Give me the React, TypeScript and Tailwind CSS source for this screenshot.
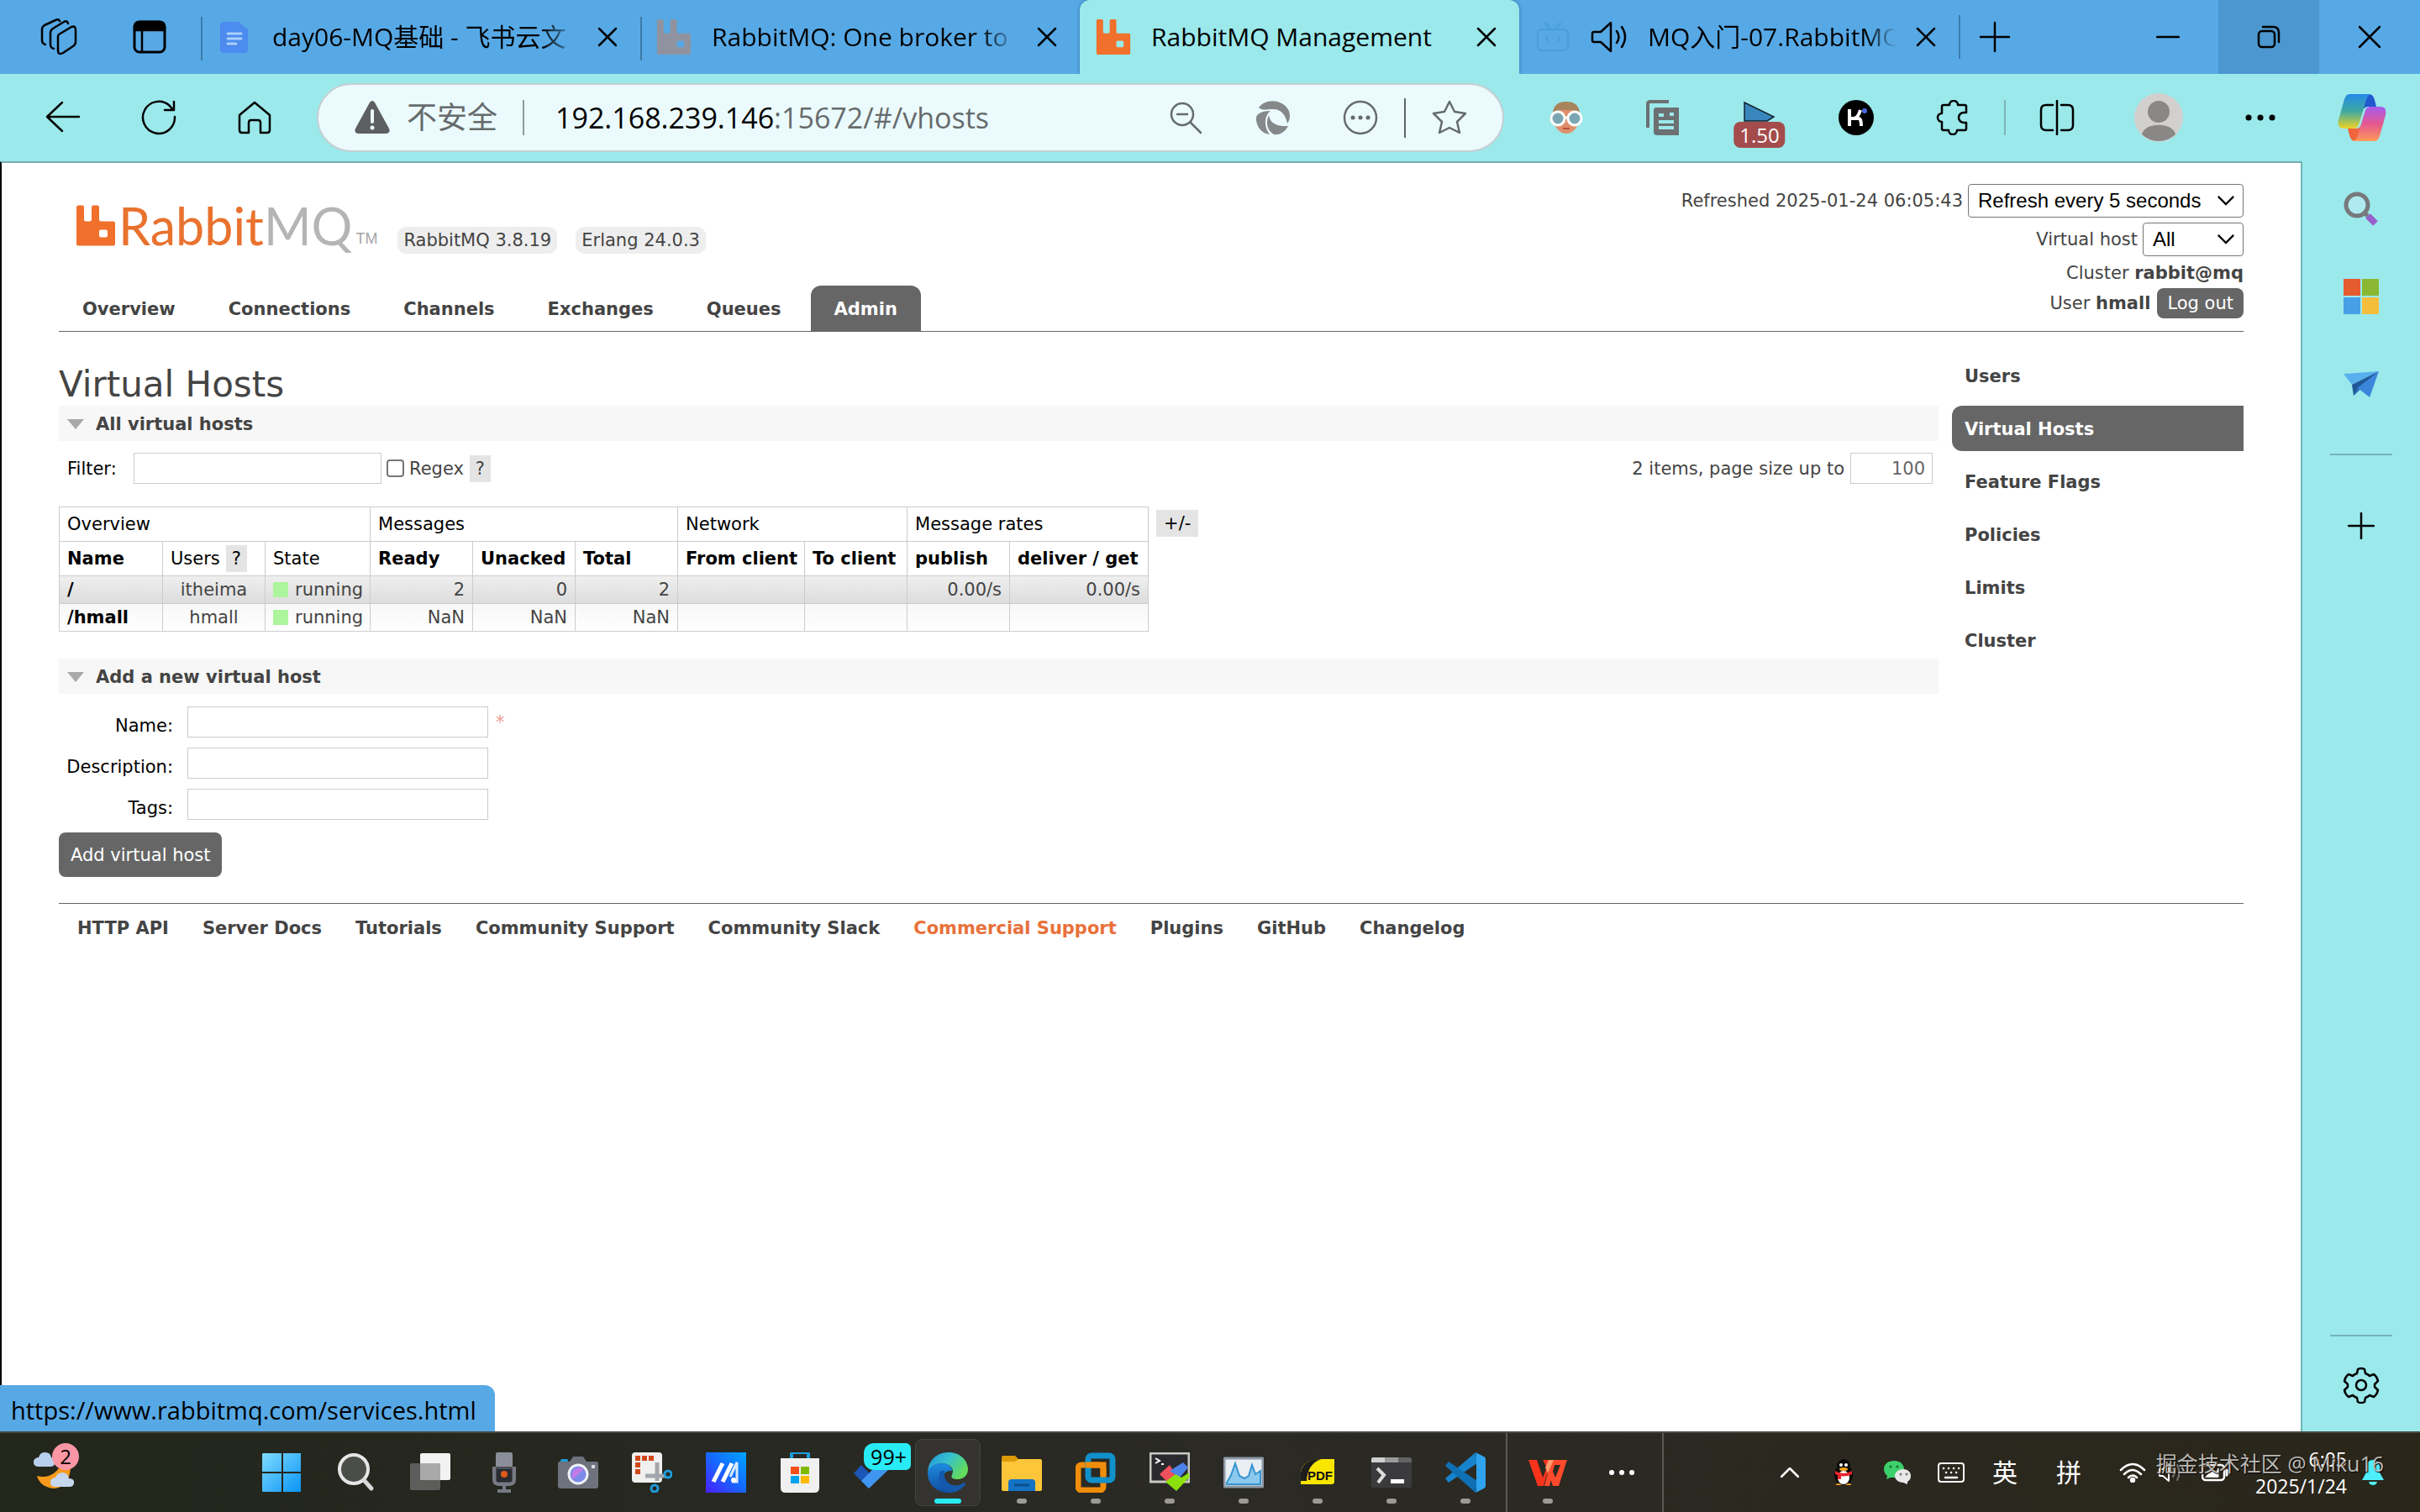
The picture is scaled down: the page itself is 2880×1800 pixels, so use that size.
import React from 'react';

const UI_FONT = "font-['Open_Sans','Noto_Sans_CJK_SC',sans-serif]";
const PAGE_FONT = "font-['DejaVu_Sans','Noto_Sans_CJK_SC',sans-serif]";

interface IconProps {
  className?: string;
  box?: string;
  children?: React.ReactNode;
}

// Outline icon, strokes follow the text colour
const Line: React.FC<IconProps> = ({ className = 'w-[42px] h-[42px]', box = '0 0 42 42', children }) => (
  <svg viewBox={box} className={`shrink-0 ${className}`} fill="none" stroke="currentColor" strokeWidth="2.5" strokeLinecap="round" strokeLinejoin="round" aria-hidden="true">
    {children}
  </svg>
);

const Solid: React.FC<IconProps> = ({ className = 'w-[48px] h-[48px]', box = '0 0 48 48', children }) => (
  <svg viewBox={box} className={`shrink-0 ${className}`} aria-hidden="true">
    {children}
  </svg>
);

const CloseIcon = () => (
  <Line className="w-6 h-6" box="0 0 24 24">
    <path d="M2 2L22 22M22 2L2 22" />
  </Line>
);

const RabbitIcon: React.FC<{ className: string }> = ({ className }) => (
  <svg viewBox="0 0 46 48" className={`shrink-0 ${className}`} fill="currentColor" aria-hidden="true">
    <path
      fillRule="evenodd"
      d="M2 0H7Q9 0 9 2V17Q9 19 11 19H16Q18 19 18 17V2Q18 0 20 0H25Q27 0 27 2V17Q27 19 29 19H44Q46 19 46 21V46Q46 48 44 48H2Q0 48 0 46V2Q0 0 2 0ZM29 29Q27 29 27 31V36Q27 38 29 38H35Q37 38 37 36V31Q37 29 35 29Z"
    />
  </svg>
);

/* ---------- Browser tab strip ---------- */

interface TabProps {
  title: string;
  icon: React.ReactNode;
  extra?: React.ReactNode;
  active?: boolean;
  divider?: boolean;
}

const Tab: React.FC<TabProps> = ({ title, icon, extra, active, divider }) => (
  <div
    className={`relative w-[523px] h-[88px] shrink-0 flex items-center gap-6 pl-[19px] pr-[27px] ${
      active ? 'bg-[#9be9eb] rounded-t-xl shadow-[0_0_4px_#2f6f9f]' : ''
    }`}
  >
    {divider && <span className="absolute left-0 top-5 w-[2px] h-[52px] bg-[#3c7ba8]" />}
    {icon}
    {extra}
    <span
      className={`flex-1 min-w-0 overflow-hidden whitespace-nowrap text-[30px] leading-[40px] ${
        active ? '' : '[mask-image:linear-gradient(to_right,black_88%,transparent_100%)]'
      }`}
    >
      {title}
    </span>
    <button aria-label={`Close ${title}`}>
      <CloseIcon />
    </button>
  </div>
);

const TabStrip = () => (
  <header className="flex items-center h-[88px] bg-[#57a9e6] text-black overflow-hidden">
    <div className="w-[239px] pl-12 flex items-center gap-16 shrink-0">
      <button aria-label="Workspaces">
        <Line className="w-[44px] h-[44px]" box="0 0 44 44">
          <path d="M22 19L37 10Q42 8 42 14V28Q42 31 39 33L27 41Q21 44 21 38V22Q21 20 22 19Z" />
          <path d="M16 36Q12 35 12 31V17Q12 14 15 12L28 4Q32 2 33 6" />
          <path d="M6 31Q2 30 2 26V13Q2 10 5 8L18 2Q22 0 23 3" />
        </Line>
      </button>
      <button aria-label="Tab actions">
        <Line className="w-[44px] h-[44px]" box="0 0 44 44">
          <rect x="4" y="4" width="36" height="36" rx="6" strokeWidth="3" />
          <path d="M4 14V10Q4 4 10 4H34Q40 4 40 10V14Z" fill="currentColor" />
          <path d="M13 14V40" />
        </Line>
      </button>
    </div>
    <Tab
      divider
      title="day06-MQ基础 - 飞书云文"
      icon={
        <Solid className="w-[42px] h-[42px]" box="0 0 42 42">
          <path d="M8 3H26L37 12V36Q37 40 33 40H8Q4 40 4 36V7Q4 3 8 3Z" fill="#4c8bf0" />
          <path d="M13 17H29M13 23H29M13 29H23" stroke="#a9d0fb" strokeWidth="3" strokeLinecap="round" />
        </Solid>
      }
    />
    <Tab divider title="RabbitMQ: One broker to q" icon={<RabbitIcon className="w-[42px] h-[42px] text-[#90939f]" />} />
    <Tab active title="RabbitMQ Management" icon={<RabbitIcon className="w-[42px] h-[42px] text-[#f0702c]" />} />
    <Tab
      title="MQ入门-07.RabbitMQ"
      icon={
        <Line className="w-[42px] h-[42px] text-[#4ba0d8]">
          <rect x="3" y="12" width="36" height="25" rx="5" />
          <path d="M12 4L17 11M30 4L25 11M14 21V26M28 21V26" />
        </Line>
      }
      extra={
        <Line className="w-[44px] h-[44px]" box="0 0 44 44">
          <path d="M4 16H12L24 5V39L12 28H4Q2 28 2 26V18Q2 16 4 16Z" />
          <path d="M31 15Q36 22 31 29M37 10Q45 22 37 34" />
        </Line>
      }
    />
    <span className="w-[2px] h-[52px] bg-[#3c7ba8]" />
    <button aria-label="New tab" className="ml-[22px]">
      <Line className="w-[38px] h-[38px]" box="0 0 38 38">
        <path d="M19 2V36M2 19H36" />
      </Line>
    </button>
    <div className="ml-auto flex shrink-0">
      <button aria-label="Minimize" className="w-[120px] h-[88px] flex items-center justify-center">
        <Line className="w-7 h-7" box="0 0 28 28">
          <path d="M1 14H27" />
        </Line>
      </button>
      <button aria-label="Restore" className="w-[120px] h-[88px] flex items-center justify-center bg-[#4c97cf]">
        <Line className="w-7 h-7" box="0 0 28 28">
          <rect x="2" y="7" width="19" height="19" rx="4" />
          <path d="M7 2H19Q26 2 26 9V20" />
        </Line>
      </button>
      <button aria-label="Close window" className="w-[120px] h-[88px] flex items-center justify-center">
        <Line className="w-7 h-7" box="0 0 28 28">
          <path d="M2 2L26 26M26 2L2 26" />
        </Line>
      </button>
    </div>
  </header>
);

/* ---------- Browser toolbar ---------- */

const AddressBar = () => (
  <div className="flex-1 min-w-0 h-[82px] mx-[53px] pl-[43px] pr-[42px] flex items-center rounded-full bg-[#ebfbfd] border-2 border-[#c5cfd3] text-[#666b6c]">
    <Solid className="w-[42px] h-[42px]" box="0 0 42 42">
      <path d="M18 3Q21 -1 24 3L41 34Q43 39 38 40H4Q-1 39 1 34Z" fill="#5d5f60" />
      <path d="M21 13V26" stroke="#ebfbfd" strokeWidth="4" strokeLinecap="round" />
      <circle cx="21" cy="33" r="2.5" fill="#ebfbfd" />
    </Solid>
    <span className="ml-5 text-[36px] leading-[48px] whitespace-nowrap">不安全</span>
    <span className="ml-[30px] mr-[37px] w-[2px] h-[42px] bg-[#8f9a9c]" />
    <span className="flex-1 min-w-0 text-[34px] leading-[48px] whitespace-nowrap">
      <span className="text-black">192.168.239.146</span>:15672/#/vhosts
    </span>
    <div className="flex items-center gap-[62px]">
      <button aria-label="Zoom out">
        <Line>
          <circle cx="17" cy="17" r="13" />
          <path d="M27 27L39 39M11 17H23" />
        </Line>
      </button>
      <button aria-label="Extension">
        <Solid className="w-[42px] h-[42px]" box="0 0 42 42">
          <path d="M4 9C12 -2 32 -2 40 13C42 20 41 24 38 28C36 18 30 10 20 11C13 11 8 13 4 9Z" fill="#85898a" />
          <path d="M1 24C0 17 6 13 18 13C10 19 10 32 17 41C8 40 2 33 1 24Z" fill="#85898a" />
          <path d="M16 18C17 28 27 32 39 31C35 39 28 42 22 41C14 36 12 28 16 18Z" fill="#85898a" />
        </Solid>
      </button>
      <button aria-label="More site actions">
        <Line>
          <circle cx="21" cy="21" r="19" />
          <path d="M12 21H12.1M21 21H21.1M30 21H30.1" strokeWidth="5" />
        </Line>
      </button>
    </div>
    <span className="mx-[31px] w-[2px] h-[47px] bg-[#5d6667]" />
    <button aria-label="Add to favorites">
      <Line>
        <path d="M21 2L27 14L40 16L30 26L33 39L21 33L9 39L12 26L2 16L15 14Z" />
      </Line>
    </button>
  </div>
);

const Toolbar = () => (
  <div className="flex items-center h-[104px] pl-[54px] pr-10 bg-[#9be9eb] text-black">
    <div className="flex items-center gap-[72px]">
      <button aria-label="Back">
        <Line>
          <path d="M20 3L2 20L20 37M2 20H40" />
        </Line>
      </button>
      <button aria-label="Refresh">
        <Line>
          <path d="M40 20A19 19 0 1 1 34 7L38 12M39 2V12H28" />
        </Line>
      </button>
      <button aria-label="Home">
        <Line>
          <path d="M3 18L21 3L39 18V36Q39 39 36 39H28V27Q28 24 25 24H17Q14 24 14 27V39H6Q3 39 3 36Z" />
        </Line>
      </button>
    </div>
    <AddressBar />
    <div className="flex items-center gap-[73px] shrink-0">
      <button aria-label="Glasses extension">
        <Solid className="w-[42px] h-[42px]" box="0 0 42 42">
          <ellipse cx="21" cy="22" rx="15" ry="18" fill="#e0906c" />
          <path d="M5 20C4 6 12 2 21 2S38 6 37 20L30 12H12Z" fill="#a8845c" />
          <circle cx="11" cy="22" r="8" fill="#7ba6b4" stroke="#fff" strokeWidth="3" />
          <circle cx="31" cy="22" r="8" fill="#7ba6b4" stroke="#fff" strokeWidth="3" />
          <path d="M18 21H24" stroke="#fff" strokeWidth="3" />
          <path d="M17 34H25" stroke="#b5533b" strokeWidth="2" />
        </Solid>
      </button>
      <button aria-label="Copy extension">
        <Solid className="w-[42px] h-[42px]" box="0 0 42 42">
          <path d="M28 2H6Q3 2 3 5V33" fill="none" stroke="#6c7072" strokeWidth="4" />
          <path d="M12 9H40V42H14Q10 42 10 38V11Z" fill="#6c7072" />
          <path d="M16 18H22M29 17H34M16 26H34M16 33H34" stroke="#9be9eb" strokeWidth="4" />
        </Solid>
      </button>
      <button aria-label="Speed extension" className="relative w-[42px] h-[42px]">
        <Solid className="w-[42px] h-[42px]" box="0 0 42 42">
          <path d="M3 3L38 20L30 25H3Z" fill="#3986bd" stroke="#10222e" strokeWidth="1.5" />
        </Solid>
        <span className="absolute left-1/2 top-[26px] -translate-x-1/2 px-[7px] rounded-lg bg-[#a44c4c] text-white text-[24px] leading-[31px]">1.50</span>
      </button>
      <button aria-label="K extension">
        <Solid className="w-[42px] h-[42px]" box="0 0 42 42">
          <circle cx="21" cy="21" r="21" fill="#000" />
          <path d="M13 11V31M13 22H24Q27 22 27 31M26 12Q23 22 18 22" fill="none" stroke="#fff" strokeWidth="4" />
          <circle cx="31" cy="13" r="3" fill="#4a6ae0" />
        </Solid>
      </button>
      <button aria-label="Extensions">
        <Line>
          <path d="M10 6H17A5 5 0 0 1 27 6H35Q37 6 37 8V15H34A6 6 0 0 0 34 27H37V34Q37 36 35 36H26A5 5 0 0 1 16 36H10Q8 36 8 34V26A5 5 0 0 1 8 16V8Q8 6 10 6Z" />
        </Line>
      </button>
    </div>
    <span className="mx-[40px] w-[2px] h-[42px] bg-[#7fb5b9]" />
    <div className="flex items-center gap-[71px] shrink-0">
      <button aria-label="Split screen">
        <Line>
          <path d="M21 1V41M16 6H8Q2 6 2 12V30Q2 36 8 36H16M26 6H34Q40 6 40 12V30Q40 36 34 36H26" />
        </Line>
      </button>
      <button aria-label="Profile">
        <Solid className="w-[58px] h-[58px]" box="0 0 58 58">
          <circle cx="29" cy="29" r="29" fill="#d2d0ce" />
          <circle cx="29" cy="22" r="13" fill="#8a8886" />
          <path d="M9 49C12 34 46 34 49 49A29 29 0 0 1 9 49Z" fill="#8a8886" />
        </Solid>
      </button>
      <button aria-label="Settings and more">
        <Line>
          <path d="M7 21H7.1M21 21H21.1M35 21H35.1" strokeWidth="7" />
        </Line>
      </button>
      <button aria-label="Copilot">
        <Solid className="w-[58px] h-[58px]" box="0 0 58 58">
          <defs>
            <linearGradient id="cpA" x1="0" y1="0" x2="0" y2="1">
              <stop offset="0" stopColor="#2589e8" />
              <stop offset="0.5" stopColor="#3fa9a0" />
              <stop offset="1" stopColor="#f0d326" />
            </linearGradient>
            <linearGradient id="cpB" x1="0" y1="0" x2="0" y2="1">
              <stop offset="0" stopColor="#a45cf0" />
              <stop offset="0.5" stopColor="#e4588f" />
              <stop offset="1" stopColor="#ff9a56" />
            </linearGradient>
          </defs>
          <path d="M30 1H37Q42 1 44 8L46 16H36Q31 16 29 22Z" fill="#2157cf" />
          <path d="M28 57H20Q16 57 14 50L12 42H22Q27 42 29 36Z" fill="#f1653d" />
          <path d="M14 1H40Q36 2 34 8L25 38Q23 42 19 42H7Q-1 42 1 32L8 7Q10 1 14 1Z" fill="url(#cpA)" />
          <path d="M44 57H18Q22 56 24 50L33 20Q35 16 39 16H51Q59 16 57 26L50 51Q48 57 44 57Z" fill="url(#cpB)" />
        </Solid>
      </button>
    </div>
  </div>
);

/* ---------- RabbitMQ management page ---------- */

const NAV = ['Overview', 'Connections', 'Channels', 'Exchanges', 'Queues', 'Admin'];

const ADMIN_LINKS = ['Users', 'Virtual Hosts', 'Feature Flags', 'Policies', 'Limits', 'Cluster'];

const FOOTER_LINKS = [
  'HTTP API',
  'Server Docs',
  'Tutorials',
  'Community Support',
  'Community Slack',
  'Commercial Support',
  'Plugins',
  'GitHub',
  'Changelog'
];

const VHOSTS = [
  { name: '/', users: 'itheima', ready: '2', unacked: '0', total: '2', publish: '0.00/s', deliver: '0.00/s' },
  { name: '/hmall', users: 'hmall', ready: 'NaN', unacked: 'NaN', total: 'NaN', publish: '', deliver: '' }
];

interface SelectProps {
  id: string;
  label: string;
  value: string;
  className: string;
}

const Select: React.FC<SelectProps> = ({ id, label, value, className }) => (
  <>
    <label htmlFor={id}>{label}</label>
    <span className="relative ml-[6px]">
      <select
        id={id}
        className={`block appearance-none h-10 pl-[11px] rounded border border-[#767676] bg-white text-black text-[24px] leading-[32px] font-['Liberation_Sans',sans-serif] ${className}`}
      >
        <option>{value}</option>
      </select>
      <svg viewBox="0 0 24 14" className="absolute right-[10px] top-[13px] w-[22px] h-[13px] pointer-events-none" fill="none" stroke="#000" strokeWidth="2.5" aria-hidden="true">
        <path d="M2 2L12 12L22 2" />
      </svg>
    </span>
  </>
);

const PageHeader = () => (
  <div className="flex justify-between border-b border-[#666]">
    <div className="flex flex-col justify-between">
      <div className="mt-[50px] ml-[21px] flex items-start">
        <div className="flex items-start h-[58px]">
          <RabbitIcon className="w-[46px] h-[49px] text-[#f0702c]" />
          <span className="ml-1 text-[61px] leading-[50px] whitespace-nowrap font-['Lato',sans-serif] text-[#e9722e]">
            Rabbit<span className="text-[#b5b5b5]">MQ</span>
          </span>
          <span className="ml-1 mt-[28px] text-[18px] leading-[24px] font-['Liberation_Sans',sans-serif] text-[#a5a5a5]">TM</span>
        </div>
        <div className="ml-[24px] mt-[26px] flex gap-[22px]">
          <span className="h-8 px-[7px] rounded-[10px] bg-[#eee] leading-8">RabbitMQ 3.8.19</span>
          <span className="h-8 px-[7px] rounded-[10px] bg-[#eee] leading-8">Erlang 24.0.3</span>
        </div>
      </div>
      <nav className="flex gap-[7px] font-bold">
        {NAV.map((item) => (
          <a
            key={item}
            href="#"
            className={`h-[54px] px-[28px] leading-[57px] rounded-t-xl ${item === 'Admin' ? 'bg-[#666] text-white' : ''}`}
          >
            {item}
          </a>
        ))}
      </nav>
    </div>
    <div className="flex flex-col items-end pt-[25px] pb-[15px] whitespace-nowrap">
      <div className="flex items-center">
        <Select id="refresh" label="Refreshed 2025-01-24 06:05:43" value="Refresh every 5 seconds" className="w-[328px]" />
      </div>
      <div className="mt-[6px] flex items-center">
        <Select id="vhost" label="Virtual host" value="All" className="w-[120px]" />
      </div>
      <div className="pt-[2px] leading-[36px]">
        Cluster <b>rabbit@mq</b>
      </div>
      <div className="flex items-center gap-2">
        <span>
          User <b>hmall</b>
        </span>
        <button className="h-9 px-3 rounded-lg bg-[#666] text-white">Log out</button>
      </div>
    </div>
  </div>
);

const SectionTitle: React.FC<{ children: React.ReactNode }> = ({ children }) => (
  <h2 className="h-[42px] pt-[2px] pl-[10px] flex items-center gap-[14px] bg-[#f7f7f7] font-bold">
    <svg viewBox="0 0 20 12" className="w-5 h-3" fill="#a9a9a9" aria-hidden="true">
      <path d="M0 0H20L10 12Z" />
    </svg>
    {children}
  </h2>
);

const Help = () => <button className="w-[25px] h-8 bg-[#e4e4e4] leading-8">?</button>;

const CELL = 'border border-[#ccc] px-[9px] text-left';

const VhostTable = () => (
  <table className="w-[1296px] table-fixed border-collapse text-left">
    <colgroup>
      <col className="w-[123px]" />
      <col className="w-[122px]" />
      <col className="w-[125px]" />
      <col className="w-[122px]" />
      <col className="w-[122px]" />
      <col className="w-[122px]" />
      <col className="w-[151px]" />
      <col className="w-[122px]" />
      <col className="w-[122px]" />
      <col className="w-[165px]" />
    </colgroup>
    <thead className="text-black whitespace-nowrap">
      <tr className="h-[41px]">
        <th colSpan={3} className={`${CELL} font-normal`}>Overview</th>
        <th colSpan={3} className={`${CELL} font-normal`}>Messages</th>
        <th colSpan={2} className={`${CELL} font-normal`}>Network</th>
        <th colSpan={2} className={`${CELL} font-normal`}>Message rates</th>
      </tr>
      <tr className="h-[41px]">
        <th className={CELL}>Name</th>
        <th className={`${CELL} font-normal`}>
          <span className="flex items-center gap-[7px]">
            Users <Help />
          </span>
        </th>
        <th className={`${CELL} font-normal`}>State</th>
        <th className={CELL}>Ready</th>
        <th className={CELL}>Unacked</th>
        <th className={CELL}>Total</th>
        <th className={CELL}>From client</th>
        <th className={CELL}>To client</th>
        <th className={CELL}>publish</th>
        <th className={CELL}>deliver / get</th>
      </tr>
    </thead>
    <tbody>
      {VHOSTS.map((v, i) => (
        <tr
          key={v.name}
          className={`h-[33px] leading-[28px] bg-linear-to-b ${i === 0 ? 'from-[#efefef] to-[#dcdcdc]' : 'from-[#f7f7f7] to-white'}`}
        >
          <td className={`${CELL} font-bold text-black`}>{v.name}</td>
          <td className="border border-[#ccc] px-[9px] text-center">{v.users}</td>
          <td className={CELL}>
            <span className="flex items-center gap-2">
              <span className="w-[18px] h-[18px] shrink-0 bg-[#adf59c]" />
              running
            </span>
          </td>
          <td className="border border-[#ccc] px-[9px] text-right">{v.ready}</td>
          <td className="border border-[#ccc] px-[9px] text-right">{v.unacked}</td>
          <td className="border border-[#ccc] px-[9px] text-right">{v.total}</td>
          <td className="border border-[#ccc]" />
          <td className="border border-[#ccc]" />
          <td className="border border-[#ccc] px-[9px] text-right">{v.publish}</td>
          <td className="border border-[#ccc] px-[9px] text-right">{v.deliver}</td>
        </tr>
      ))}
    </tbody>
  </table>
);

const FIELD = 'h-[37px] border border-[#ccc] bg-white px-2';

const AddVhostForm = () => (
  <form onSubmit={(e) => e.preventDefault()}>
    <div className="mt-[15px] flex flex-col gap-3">
      {['Name', 'Description', 'Tags'].map((field) => (
        <div key={field} className="flex items-center h-[37px]">
          <label htmlFor={`field-${field}`} className="w-[136px] mt-2 text-right text-black">
            {field}:
          </label>
          <input id={`field-${field}`} type="text" className={`${FIELD} ml-[17px] w-[358px]`} />
          {field === 'Name' && <span className="ml-[9px] text-[#ec9a93]">*</span>}
        </div>
      ))}
    </div>
    <button className="mt-[15px] h-[53px] px-[14px] rounded-lg bg-[#666] text-white">Add virtual host</button>
  </form>
);

const ManagementPage = () => (
  <main className={`flex-1 min-w-0 px-[68px] bg-white border-t-2 border-t-[#7aabb0] border-l-2 border-l-black text-[#444] text-[21px] leading-[28px] ${PAGE_FONT}`}>
    <PageHeader />
    <div className="flex gap-4">
      <div className="flex-1 min-w-0">
        <h1 className="pt-[38px] text-[42px] leading-[50px]">Virtual Hosts</h1>
        <SectionTitle>All virtual hosts</SectionTitle>
        <div className="mt-[14px] mb-[27px] flex items-center pl-[10px] pr-[7px]">
          <label htmlFor="filter" className="w-[79px] text-black">Filter:</label>
          <input id="filter" type="text" className={`${FIELD} w-[295px]`} />
          <input id="regex" type="checkbox" className="appearance-none ml-[6px] w-[21px] h-[21px] rounded border-2 border-[#767676] bg-white" />
          <label htmlFor="regex" className="ml-[6px] mr-[7px]">Regex</label>
          <Help />
          <label htmlFor="pagesize" className="ml-auto mr-[7px]">2 items, page size up to</label>
          <input id="pagesize" type="text" defaultValue="100" className={`${FIELD} w-[98px] text-right text-[#666]`} />
        </div>
        <div className="flex items-start gap-[9px]">
          <VhostTable />
          <button className="mt-1 h-8 px-[9px] bg-[#e4e4e4] text-black leading-8">+/-</button>
        </div>
        <div className="h-8" />
        <SectionTitle>Add a new virtual host</SectionTitle>
        <AddVhostForm />
      </div>
      <nav className="w-[347px] shrink-0 pt-[25px] flex flex-col gap-[9px] font-bold">
        {ADMIN_LINKS.map((item) => (
          <a
            key={item}
            href="#"
            className={`h-[54px] pl-[15px] leading-[56px] rounded-l-xl ${item === 'Virtual Hosts' ? 'bg-[#666] text-white' : ''}`}
          >
            {item}
          </a>
        ))}
      </nav>
    </div>
    <footer className="mt-[31px] pt-[15px] pl-[22px] border-t border-[#666] flex gap-10 font-bold">
      {FOOTER_LINKS.map((item) => (
        <a key={item} href="#" className={item === 'Commercial Support' ? 'text-[#e8713a]' : ''}>
          {item}
        </a>
      ))}
    </footer>
  </main>
);

/* ---------- Edge sidebar ---------- */

const EdgeSidebar = () => (
  <aside className="w-[142px] shrink-0 flex flex-col items-center bg-[#9be9eb] border-l-2 border-[#6fb6bb] text-black pt-[36px] pb-[33px]">
    <button aria-label="Search">
      <Solid className="w-[42px] h-[42px]" box="0 0 42 42">
        <circle cx="16" cy="16" r="13" fill="#aeeaf0" stroke="#77797c" strokeWidth="5" />
        <path d="M25 26L29 29" stroke="#77797c" strokeWidth="5" />
        <path d="M29 29L38 38" stroke="#9660cc" strokeWidth="8" />
      </Solid>
    </button>
    <button aria-label="Microsoft 365" className="mt-[62px]">
      <Solid className="w-[42px] h-[42px]" box="0 0 42 42">
        <path d="M0 0H20V20H0Z" fill="#e55b30" />
        <path d="M22 0H42V20H22Z" fill="#8ab833" />
        <path d="M0 22H20V42H0Z" fill="#479fe6" />
        <path d="M22 22H42V42H22Z" fill="#f4bd3c" />
      </Solid>
    </button>
    <button aria-label="Drop" className="mt-[62px]">
      <Solid className="w-[42px] h-[42px]" box="0 0 42 42">
        <path d="M0 9L42 6L10 22Z" fill="#58b0ee" />
        <path d="M42 6L10 22L12 35Z" fill="#1f5896" />
        <path d="M42 6L17 25L12 35Z" fill="#2d73c0" />
        <path d="M42 6L17 26L31 37Z" fill="#3b86da" />
      </Solid>
    </button>
    <span className="mt-[62px] w-[74px] h-[2px] bg-[#74b4b9]" />
    <button aria-label="Customize sidebar" className="mt-[68px]">
      <Line className="w-8 h-8" box="0 0 32 32">
        <path d="M16 1V31M1 16H31" />
      </Line>
    </button>
    <span className="mt-auto w-[74px] h-[2px] bg-[#74b4b9]" />
    <button aria-label="Settings" className="mt-[36px]">
      <Line className="w-[44px] h-[44px]" box="0 0 44 44">
        <path d="M17 8L18 3Q22 1 26 3L27 8Q30 9 32 11L37 9Q41 12 42 17L38 21V24L42 28Q41 33 37 36L32 34Q30 36 27 37L26 42Q22 44 18 42L17 37Q14 36 12 34L7 36Q3 33 2 28L6 24V21L2 17Q3 12 7 9L12 11Q14 9 17 8Z" />
        <circle cx="22" cy="22" r="6" />
      </Line>
    </button>
  </aside>
);

/* ---------- Windows taskbar ---------- */

interface TaskProps {
  name: string;
  running?: boolean;
  children: React.ReactNode;
}

const Task: React.FC<TaskProps> = ({ name, running, children }) => (
  <button aria-label={name} className="relative w-[88px] h-[94px] shrink-0 flex items-center justify-center">
    {children}
    {running && <span className="absolute left-1/2 -translate-x-1/2 top-[78px] w-3 h-[6px] rounded-full bg-[#9b9a95]" />}
  </button>
);

const TaskbarApps = () => (
  <>
    <Task name="Start">
      <Solid>
        <defs>
          <linearGradient id="win" x1="0" y1="0" x2="1" y2="1">
            <stop offset="0" stopColor="#7fdcff" />
            <stop offset="1" stopColor="#0a94f5" />
          </linearGradient>
        </defs>
        <path d="M1 1H23V23H0V2ZM25 1H46V23H25ZM0 25H23V47H1L0 46ZM25 25H46V47H25Z" fill="url(#win)" />
      </Solid>
    </Task>
    <Task name="Search">
      <Solid>
        <circle cx="21" cy="20" r="17" fill="#4b4d49" stroke="#e6e6e6" strokeWidth="4" />
        <path d="M33 33L42 43" stroke="#d9d9d9" strokeWidth="5" strokeLinecap="round" />
      </Solid>
    </Task>
    <Task name="Task view">
      <Solid>
        <rect x="12" y="1" width="36" height="32" rx="2" fill="#f2f2f2" />
        <rect x="0" y="13" width="36" height="32" rx="2" fill="#5d5d5b" />
        <rect x="12" y="13" width="24" height="20" fill="#a9a9a9" />
      </Solid>
    </Task>
    <Task name="Sound recorder">
      <Solid>
        <path d="M14 2Q14 0 16 0H32Q34 0 34 2V20H14Z" fill="#8b8e98" />
        <path d="M12 17V32Q12 38 18 38H30Q36 38 36 32V17" fill="#4a4d55" stroke="#777a84" strokeWidth="4" />
        <rect x="15" y="20" width="18" height="15" fill="#2b2c30" />
        <circle cx="24" cy="26" r="4" fill="#e0591b" />
        <path d="M24 39V45M16 46H32" stroke="#777a84" strokeWidth="4" />
      </Solid>
    </Task>
    <Task name="Camera">
      <Solid>
        <rect x="3" y="8" width="9" height="5" rx="2" fill="#1d9cdd" />
        <path d="M0 13Q0 11 2 11H14L18 5H30L34 11H46Q48 11 48 13V40Q48 43 45 43H3Q0 43 0 40Z" fill="#6d727c" />
        <circle cx="24" cy="26" r="11" fill="#7b8be8" stroke="#f0f2f8" strokeWidth="3" />
        <path d="M18 32A9 9 0 0 1 31 20Z" fill="#c07be8" />
        <rect x="40" y="15" width="4" height="4" fill="#d8dadf" />
      </Solid>
    </Task>
    <Task name="Snipping tool">
      <Solid>
        <rect x="0" y="0" width="36" height="36" rx="4" fill="#f0f0f0" />
        <path d="M7 26V7H28" fill="none" stroke="#d1481a" strokeWidth="6" strokeDasharray="6 2" />
        <path d="M30 12V34M16 28H40" stroke="#a3a6aa" strokeWidth="5" />
        <circle cx="43" cy="26" r="4" fill="none" stroke="#1d9cdd" strokeWidth="3" />
        <circle cx="27" cy="43" r="4" fill="none" stroke="#1d9cdd" strokeWidth="3" />
      </Solid>
    </Task>
    <Task name="Assistant">
      <Solid>
        <defs>
          <linearGradient id="ast" x1="0" y1="1" x2="1" y2="0">
            <stop offset="0" stopColor="#4a1fff" />
            <stop offset="0.5" stopColor="#1668ff" />
            <stop offset="1" stopColor="#00a5ff" />
          </linearGradient>
        </defs>
        <rect width="48" height="48" fill="url(#ast)" />
        <path d="M9 35L20 13M20 35L31 13" stroke="#fff" strokeWidth="5" />
        <path d="M29 29L37 12V35H31" fill="none" stroke="#d7e8ff" strokeWidth="3" />
        <circle cx="33" cy="33" r="3" fill="#fff" />
      </Solid>
    </Task>
    <Task name="Store">
      <Solid>
        <path d="M14 9V2Q14 0 16 0H32Q34 0 34 2V9" fill="none" stroke="#1d9cdd" strokeWidth="4" />
        <path d="M1 7H47V42Q47 48 41 48H7Q1 48 1 42Z" fill="#f0f0f0" />
        <path d="M13 17H23V26H13Z" fill="#f1511b" />
        <path d="M25 17H35V26H25Z" fill="#7fba00" />
        <path d="M13 28H23V37H13Z" fill="#00a4ef" />
        <path d="M25 28H35V37H25Z" fill="#fbb900" />
      </Solid>
    </Task>
    <Task name="To Do">
      <Solid>
        <path d="M0 25L9 15L24 30L18 43Z" fill="#1c56b5" />
        <path d="M18 43L9 34L33 10L43 19Z" fill="#3f95ef" />
      </Solid>
      <span className="absolute right-0 top-[12px] h-8 pl-2 pr-[5px] rounded-l-xl rounded-r-md bg-[#28ebf5] text-black text-[25px] leading-8">99+</span>
    </Task>
    <Task name="Edge">
      <span className="absolute left-[5px] top-[7px] w-[78px] h-20 rounded-lg bg-[#34332f] border border-[#44433f]" />
      <svg viewBox="0 0 48 48" className="relative w-12 h-12" aria-hidden="true">
        <defs>
          <linearGradient id="edgeA" x1="0" y1="0" x2="1" y2="0.5">
            <stop offset="0" stopColor="#2390dc" />
            <stop offset="0.5" stopColor="#35c0d0" />
            <stop offset="1" stopColor="#62dc5c" />
          </linearGradient>
          <linearGradient id="edgeB" x1="0" y1="0" x2="0" y2="1">
            <stop offset="0" stopColor="#1d8de0" />
            <stop offset="1" stopColor="#114d9e" />
          </linearGradient>
        </defs>
        <path d="M0 24C1 8 12 0 25 0C39 0 48 10 48 20C48 28 42 32 36 32C30 32 27 30 29 27C33 18 24 13 17 13C8 13 2 18 0 24Z" fill="url(#edgeA)" />
        <path d="M0 24C2 16 10 13 17 13C24 13 29 17 29 22C20 21 16 28 20 36C24 43 34 43 42 37C45 35 46 37 44 39C38 46 31 48 25 48C10 48 0 38 0 24Z" fill="url(#edgeB)" />
        <path d="M16 22C10 29 14 44 26 48C34 48 40 44 44 39C45 37 44 36 42 37C32 43 18 38 20 22Z" fill="#1459ac" />
      </svg>
      <span className="absolute left-1/2 -translate-x-1/2 top-[78px] w-8 h-[6px] rounded-full bg-[#28ebf5]" />
    </Task>
    <Task name="File explorer" running>
      <Solid>
        <path d="M0 6Q0 4 2 4H16L20 8V14H0Z" fill="#dd9a09" />
        <path d="M0 11H16L20 8H46Q48 8 48 10V44Q48 46 46 46H2Q0 46 0 44Z" fill="#fcc53a" />
        <path d="M8 46V36Q8 32 12 32H36Q40 32 40 36V46Z" fill="#1473c4" />
        <path d="M15 39H33" stroke="#0b4f8e" strokeWidth="3" />
      </Solid>
    </Task>
    <Task name="VMware" running>
      <Solid>
        <rect x="3" y="15" width="30" height="30" rx="4" fill="none" stroke="#f08d0a" strokeWidth="7" />
        <rect x="15" y="4" width="29" height="29" rx="4" fill="none" stroke="#1191cb" strokeWidth="7" />
        <path d="M12 15H33V28" fill="none" stroke="#f08d0a" strokeWidth="7" />
      </Solid>
    </Task>
    <Task name="MobaXterm" running>
      <Solid>
        <rect x="1" y="1" width="46" height="34" fill="#2a2a2e" stroke="#c9c9c2" strokeWidth="3" />
        <path d="M7 7L12 10L7 13M14 14H17" fill="none" stroke="#fff" strokeWidth="2" />
        <path d="M12 26L24 15L33 29L22 36Z" fill="#f0505b" />
        <path d="M24 22L40 12L46 18L36 30Z" fill="#4b83ea" />
        <path d="M19 35L31 26L38 30L47 24V30L32 46Z" fill="#8be00d" />
      </Solid>
    </Task>
    <Task name="Performance monitor" running>
      <Solid>
        <rect x="1" y="7" width="46" height="34" rx="1" fill="#e9eef5" stroke="#8c98a5" strokeWidth="3" />
        <path d="M4 36L9 27L14 13L19 28L25 31L30 28L34 15L38 26L44 22V38H4Z" fill="#8cc8ee" stroke="#3495cf" strokeWidth="2" />
      </Solid>
    </Task>
    <Task name="PDF editor" running>
      <Solid>
        <path d="M4 38V24Q6 8 30 8H44V36L42 38Z" fill="#f9e500" />
        <path d="M4 34V24Q7 8 28 8Q12 14 11 34Z" fill="#1d1d1d" />
        <text x="12" y="33" fontSize="15" fontWeight="bold" fontFamily="Liberation Sans" fill="#111">PDF</text>
      </Solid>
    </Task>
    <Task name="Terminal" running>
      <Solid>
        <rect x="0" y="6" width="48" height="36" rx="2" fill="#3b3b3d" />
        <path d="M0 12V8Q0 6 2 6H16V12Z" fill="#cfcfcf" />
        <path d="M16 6H32V12H16Z" fill="#9b9b9b" />
        <path d="M32 6H46L48 8V12H32Z" fill="#636363" />
        <path d="M7 19L15 27L8 36" fill="none" stroke="#ddd" strokeWidth="4" />
        <rect x="23" y="32" width="16" height="5" fill="#fff" />
      </Solid>
    </Task>
    <Task name="VS Code" running>
      <Solid>
        <path d="M36 0L0 31L4 36L38 13Z" fill="#1683cc" />
        <path d="M36 48L0 16L4 11L38 34Z" fill="#0f6fb3" />
        <path d="M36 0L46 5Q48 6 48 8V40Q48 42 46 43L36 48Q37 46 37 44V4Q37 2 36 0Z" fill="#2fa3ee" />
      </Solid>
    </Task>
  </>
);

const Taskbar = () => (
  <div className="relative h-24 flex items-center border-t-2 border-[#484a44] bg-linear-to-r from-[#22261b] via-[#2b2a25] to-[#2a261a] text-white">
    <button aria-label="Weather" className="relative w-[292px] h-[94px] shrink-0 flex items-center pl-10">
      <Solid className="w-[50px] h-[50px]" box="0 0 50 50">
        <path d="M4 29C16 32 28 28 34 12L44 16C44 32 38 43 24 44C13 43 6 37 4 29Z" fill="#f59a1c" />
        <path d="M5 18Q-1 17 0 11Q2 7 6 7Q8 0 14 1Q20 1 21 7Q27 9 25 15Q24 18 20 18Z" fill="#b9cfee" />
        <path d="M25 42Q19 41 20 35Q22 31 26 31Q28 25 35 25Q41 26 42 32Q49 32 48 38Q47 42 43 42Z" fill="#c6d7f0" />
      </Solid>
      <span className="absolute left-[62px] top-[12px] w-8 h-8 rounded-full bg-[#fb96a4] text-black text-center text-[24px] leading-8">2</span>
    </button>
    <TaskbarApps />
    <span className="ml-1 w-[2px] h-[94px] bg-[#5a5955]" />
    <span className="ml-1 flex">
      <Task name="WPS Office" running>
        <Solid>
          <path d="M1 9H11L18 30L23 18L18 9H28L19 40H12Z" fill="#f8331c" />
          <path d="M20 40L28 9H47L37 40H30L26 28L29 20L33 30L39 15H32L26 40Z" fill="#ff4a2b" />
          <path d="M25 9H31L24 25L21 18Z" fill="#ff9a6b" />
        </Solid>
      </Task>
      <Task name="More apps">
        <Line className="w-8 h-8" box="0 0 32 32">
          <path d="M4 16H4.1M16 16H16.1M28 16H28.1" strokeWidth="6" />
        </Line>
      </Task>
    </span>
    <span className="ml-1 w-[2px] h-[94px] bg-[#5a5955]" />

    {/* System tray */}
    <div className="ml-auto pr-[42px] flex items-center shrink-0">
      <button aria-label="Show hidden icons" className="w-16 flex justify-center">
        <Line className="w-[22px] h-3" box="0 0 22 12">
          <path d="M1 11L11 1L21 11" />
        </Line>
      </button>
      <button aria-label="QQ" className="w-16 flex justify-center">
        <Solid className="w-7 h-8" box="0 0 28 32">
          <ellipse cx="14" cy="19" rx="11" ry="12" fill="#0a0a0a" />
          <ellipse cx="14" cy="9" rx="8" ry="9" fill="#0a0a0a" />
          <ellipse cx="14" cy="22" rx="7" ry="8" fill="#fff" />
          <path d="M4 14Q14 20 24 14V18Q14 23 4 18Z" fill="#e8242b" />
          <path d="M7 18H11V24H7Z" fill="#e8242b" />
          <circle cx="11" cy="7" r="2" fill="#fff" />
          <circle cx="17" cy="7" r="2" fill="#fff" />
          <ellipse cx="14" cy="12" rx="5" ry="2" fill="#f5a21a" />
          <path d="M4 31Q8 27 12 31ZM16 31Q20 27 24 31Z" fill="#f5a21a" />
        </Solid>
      </button>
      <button aria-label="WeChat" className="w-16 flex justify-center">
        <Solid className="w-8 h-7" box="0 0 32 28">
          <path d="M12 0C5 0 0 4 0 10C0 14 2 16 4 18L3 22L8 20H12C19 20 24 16 24 10S19 0 12 0Z" fill="#3ccf6b" />
          <path d="M23 10C17 10 13 14 13 18S17 26 23 26L28 28L28 25C31 23 32 21 32 18C32 14 29 10 23 10Z" fill="#e8e8e8" />
          <circle cx="8" cy="7" r="1.5" fill="#1a6b35" />
          <circle cx="16" cy="7" r="1.5" fill="#1a6b35" />
          <circle cx="20" cy="16" r="1.5" fill="#777" />
          <circle cx="27" cy="16" r="1.5" fill="#777" />
        </Solid>
      </button>
      <button aria-label="Touch keyboard" className="w-16 flex justify-center">
        <Line className="w-8 h-6" box="0 0 32 24">
          <rect x="1" y="1" width="30" height="22" rx="3" strokeWidth="2" />
          <path d="M7 7H7.1M13 7H13.1M19 7H19.1M25 7H25.1M10 12H10.1M16 12H16.1M22 12H22.1M9 18H23" />
        </Line>
      </button>
      <button className="w-16 text-[30px] leading-[40px]">英</button>
      <button className="w-[88px] text-[30px] leading-[40px]">拼</button>
      <button aria-label="Network, volume, battery" className="ml-4 flex items-center">
        <Line className="w-8 h-6" box="0 0 32 24">
          <path d="M2 9Q16 -5 30 9M6 14Q16 4 26 14M11 18Q16 13 21 18" />
          <circle cx="16" cy="21" r="2" fill="currentColor" />
        </Line>
        <Line className="ml-[14px] w-7 h-6" box="0 0 28 24">
          <path d="M2 8H6L13 2V22L6 16H2Z" strokeWidth="2" />
          <path d="M18 7Q21 12 18 17M23 3Q28 12 23 21" stroke="#777" strokeWidth="2" />
        </Line>
        <Line className="ml-6 w-8 h-6" box="0 0 32 24">
          <rect x="1" y="3" width="26" height="18" rx="4" />
          <path d="M30 9V15" strokeWidth="3" />
          <path d="M5 17L12 10L17 14L20 7V17Z" fill="currentColor" strokeWidth="1" />
        </Line>
      </button>
      <div className="w-[141px] text-right text-[23px] leading-8">
        <div>6:05</div>
        <div>2025/1/24</div>
      </div>
      <button aria-label="Notifications" className="ml-[17px]">
        <Solid className="w-7 h-8" box="0 0 28 32">
          <path d="M14 1C19 1 22 5 22 10V16L27 25H1L6 16V10C6 5 9 1 14 1ZM9 27H19Q18 31 14 31T9 27Z" fill="#4df0fb" />
        </Solid>
      </button>
    </div>
    <span className="absolute right-[43px] top-[19px] whitespace-nowrap text-[25px] leading-[34px] text-[#d2d0cd]/90 [text-shadow:1px_1px_1px_#000]">
      掘金技术社区 @ Miku16
    </span>
  </div>
);

export default function App() {
  return (
    <div className={`min-h-screen flex flex-col bg-[#9be9eb] ${UI_FONT}`}>
      <TabStrip />
      <Toolbar />
      <div className="relative flex-1 flex">
        <ManagementPage />
        <EdgeSidebar />
        {/* Link preview shown while a footer link is hovered */}
        <div className="absolute left-0 bottom-0 h-[55px] pl-[13px] pr-[22px] rounded-tr-xl bg-[#57a9e6] text-black text-[29px] leading-[59px]">
          https://www.rabbitmq.com/services.html
        </div>
      </div>
      <Taskbar />
    </div>
  );
}
